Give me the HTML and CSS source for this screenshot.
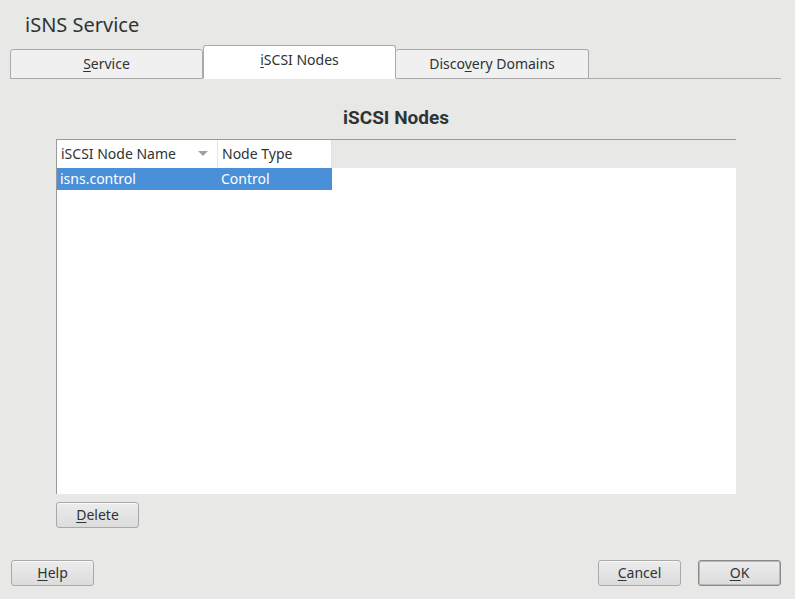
FILE: index.html
```html
<!DOCTYPE html>
<html>
<head>
<meta charset="utf-8">
<link rel="stylesheet" href="styles.css">
</head>
<body>
<div class="dialog">
  <h1 class="title">iSNS Service</h1>
  <div class="tabs">
    <div class="tab"><span><u>S</u>ervice</span></div>
    <div class="tab active"><span><u>i</u>SCSI Nodes</span></div>
    <div class="tab"><span>Disco<u>v</u>ery Domains</span></div>
    <div class="tab-rest"></div>
  </div>
  <div class="content">
    <h2 class="heading">iSCSI Nodes</h2>
    <div class="table">
      <div class="thead">
        <div class="th col1">iSCSI Node Name<svg class="sort" width="10" height="6" viewBox="0 0 10 6"><path d="M0 0h10L5 5z" fill="#a0a0a0"/></svg></div>
        <div class="th col2">Node Type</div>
        <div class="th-fill"></div>
      </div>
      <div class="tbody">
        <div class="row selected">
          <div class="td col1">isns.control</div>
          <div class="td col2">Control</div>
        </div>
      </div>
    </div>
    <div class="actions">
      <button class="btn"><u>D</u>elete</button>
    </div>
  </div>
  <div class="footer">
    <button class="btn"><u>H</u>elp</button>
    <div class="spacer"></div>
    <button class="btn"><u>C</u>ancel</button>
    <button class="btn default"><u>O</u>K</button>
  </div>
</div>
</body>
</html>
```

FILE: styles.css
```css
* { box-sizing: border-box; }
html, body { margin: 0; padding: 0; }
body {
  background: #e8e8e7;
  font-family: "Noto Sans", "Open Sans", sans-serif;
  font-size: 14px;
  color: #2e3436;
  width: 795px;
  height: 599px;
  overflow: hidden;
}
u { text-decoration: underline; text-underline-offset: 2px; }
.dialog { display: flex; flex-direction: column; height: 599px; }
.title {
  margin: 0;
  padding: 11px 0 0 25px;
  height: 45px;
  font-weight: normal;
  font-size: 20px;
  line-height: 27px;
  color: #2e3436;
}
.tabs {
  display: flex;
  align-items: flex-end;
  margin-left: 10px;
  margin-right: 14px;
  height: 34px;
}
.tab {
  width: 193px;
  height: 30px;
  background: #f0f0f0;
  border: 1px solid #a9a9a9;
  border-bottom: 1px solid #a9a9a9;
  border-radius: 3px 3px 0 0;
  display: flex;
  justify-content: center;
  align-items: center;
  padding-bottom: 1px;
  color: #2e3436;
}
.tab + .tab { border-left: none; }
.tab.active {
  height: 34px;
  background: #ffffff;
  border: 1px solid #a9a9a9;
  border-bottom: 1px solid #ffffff;
  padding-bottom: 5px;
}
.tab.active + .tab { border-left: none; }
.tab-rest { flex: 1; border-bottom: 1px solid #a9a9a9; height: 1px; }
.content {
  display: flex;
  flex-direction: column;
  padding: 0 59px 0 56px;
}
.heading {
  margin: 0;
  padding-top: 26px;
  height: 60px;
  text-align: center;
  font-family: Roboto, "Noto Sans", sans-serif;
  font-weight: bold;
  font-size: 19px;
  line-height: 26px;
  color: #2e3436;
}
.table {
  height: 355px;
  border-top: 1px solid #9a9a9a;
  border-left: 1px solid #9a9a9a;
  background: #ffffff;
  display: flex;
  flex-direction: column;
}
.thead { display: flex; height: 28px; }
.th {
  background: #ffffff;
  display: flex;
  align-items: center;
  padding-left: 4px;
  padding-bottom: 2px;
  color: #2e3436;
  border-right: 1px solid #e4e4e4;
}
.th-fill { flex: 1; background: #e8e8e7; }
.col1 { width: 161px; }
.col2 { width: 114px; }
.th.col1 { position: relative; }
.sort { position: absolute; left: 141px; top: 11px; }
.row { display: flex; height: 22px; }
.row.selected .td { background: #4a90d9; color: #ffffff; }
.td { display: flex; align-items: center; padding-left: 3px; padding-bottom: 2px; }
.actions { padding-top: 8px; height: 66px; }
.btn {
  width: 83px;
  height: 26px;
  border: 1px solid #a9a9a9;
  border-radius: 3px;
  background: linear-gradient(#ececec, #dcdcdc);
  font-family: "Noto Sans", "Open Sans", sans-serif;
  font-size: 14px;
  color: #2e3436;
  padding: 0 0 1px 0;
  box-shadow: inset 0 1px 0 #f8f8f8;
}
.footer {
  display: flex;
  padding: 0 14px 0 11px;
}
.spacer { flex: 1; }
.footer .btn + .btn { margin-left: 17px; }
.btn.default { border: 1px solid #8a8a8a; box-shadow: inset 0 0 0 1px #b8b8b8; }
```
